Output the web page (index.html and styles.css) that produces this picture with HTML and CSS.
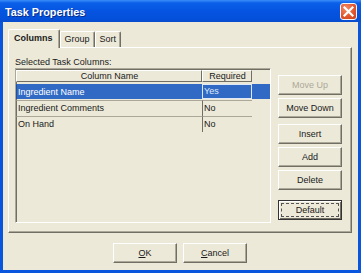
FILE: index.html
```html
<!DOCTYPE html>
<html lang="en">
<head>
    <meta charset="UTF-8">
    <title>Task Properties</title>
    <link rel="stylesheet" href="styles.css">
</head>
<body>
    <div class="window">
        <div class="titlebar">
            <span class="title">Task Properties</span>
            <span class="close-btn">
                <svg width="11" height="11" viewBox="0 0 11 11">
                    <path d="M1.5 1.5 L9.5 9.5 M9.5 1.5 L1.5 9.5" stroke="#fff" stroke-width="2.2" stroke-linecap="square"/>
                </svg>
            </span>
        </div>
        <div class="client">
            <div class="tabs">
                <div class="tab active">Columns</div>
                <div class="tab">Group</div>
                <div class="tab">Sort</div>
            </div>
            <div class="panel">
                <div class="label">Selected Task Columns:</div>
                <div class="panel-body">
                    <div class="grid">
                        <div class="grid-row head">
                            <div class="cell name">Column Name</div>
                            <div class="cell req">Required</div>
                        </div>
                        <div class="grid-row selected">
                            <div class="cell name">Ingredient Name</div>
                            <div class="cell req">Yes</div>
                        </div>
                        <div class="grid-row">
                            <div class="cell name">Ingredient Comments</div>
                            <div class="cell req">No</div>
                        </div>
                        <div class="grid-row">
                            <div class="cell name">On Hand</div>
                            <div class="cell req">No</div>
                        </div>
                    </div>
                    <div class="side-buttons">
                        <button class="btn disabled">Move Up</button>
                        <button class="btn">Move Down</button>
                        <button class="btn gap-top">Insert</button>
                        <button class="btn">Add</button>
                        <button class="btn">Delete</button>
                        <button class="btn default gap-big"><span>Default</span></button>
                    </div>
                </div>
            </div>
            <div class="footer">
                <button class="btn wide"><u>O</u>K</button>
                <button class="btn wide"><u>C</u>ancel</button>
            </div>
        </div>
    </div>
</body>
</html>
```

FILE: styles.css
```css
body {
    margin: 0;
    padding: 0;
    background: #fff;
}
.window {
    width: 361px;
    height: 273px;
    box-sizing: border-box;
    background: #0a55de;
    padding: 0 3px 3px 3px;
    display: flex;
    flex-direction: column;
    font-family: "Liberation Sans", Arial, sans-serif;
    font-size: 9px;
    color: #1a1a1a;
}
.titlebar {
    height: 22px;
    margin: 0 -3px;
    padding: 0 4px 0 5px;
    background: linear-gradient(to bottom, #3c8ef8 0, #0a5fe8 3px, #0553e0 12px, #0450da 19px, #0a4ccd 22px);
    display: flex;
    align-items: center;
    justify-content: space-between;
}
.title {
    color: #fff;
    font-weight: bold;
    font-size: 10.8px;
    text-shadow: 1px 1px 0 #0a2d8a;
    padding-top: 1px;
}
.close-btn {
    width: 15px;
    height: 15px;
    border: 1px solid #f4f4f4;
    border-radius: 3px;
    background: radial-gradient(circle at 35% 30%, #f28a66, #e0532b 60%, #c8431e);
    display: flex;
    align-items: center;
    justify-content: center;
    margin-top: 1px;
}
.client {
    flex: 1;
    background: #ece9d8;
    padding: 7px 6px 0 5px;
    display: flex;
    flex-direction: column;
}
.tabs {
    display: flex;
    align-items: flex-end;
    padding-left: 1px;
    height: 18px;
    position: relative;
    z-index: 1;
}
.tab {
    height: 15px;
    padding: 0 4px 0 4px;
    border-top: 1px solid #fff;
    border-left: 1px solid #fff;
    border-right: 1px solid #716f64;
    box-shadow: inset -1px 0 0 #aca899;
    border-radius: 2px 2px 0 0;
    background: #ece9d8;
    line-height: 15px;
}
.tab.active {
    font-weight: bold;
    padding: 0 6px 0 5px;
    height: 18px;
    line-height: 17px;
    margin-bottom: -1px;
    margin-left: -1px;
}
.panel {
    height: 186px;
    box-sizing: border-box;
    border: 1px solid;
    border-color: #fff #716f64 #716f64 #fff;
    box-shadow: inset -1px -1px 0 #aca899;
    background: #ece9d8;
    padding: 9px 0 0 6px;
}
.label {
    height: 11px;
    line-height: 10px;
}
.panel-body {
    display: flex;
}
.grid {
    width: 256px;
    height: 155px;
    box-sizing: border-box;
    border: 1px solid;
    border-color: #aca899 #fff #fff #aca899;
    box-shadow: inset 1px 1px 0 #716f64;
    background: #ece9d8;
    padding-top: 1px;
}
.grid-row {
    display: flex;
    height: 16px;
}
.grid-row.head {
    height: 12px;
    margin-bottom: 2px;
}
.cell {
    box-sizing: border-box;
    padding-left: 1px;
    white-space: nowrap;
    line-height: 15px;
    border-top: 1px solid #aca899;
    border-left: 1px solid #716f64;
}
.cell.name {
    width: 186px;
}
.cell.req {
    width: 50px;
}
.head .cell {
    text-align: center;
    border: 1px solid;
    border-color: #fff #716f64 #716f64 #fff;
    line-height: 10px;
    background: #ece9d8;
}
.selected {
    background: #316ac5;
    width: 254px;
    height: 15px;
    margin-bottom: 1px;
    color: #fff;
}
.selected .cell {
    border-color: #316ac5;
    line-height: 14px;
}
.selected .cell.name {
    border-left-color: #24509a;
}
.selected .cell.req {
    border: 1px solid #dfe8f7;
    line-height: 13px;
    color: #dfe8f7;
}
.side-buttons {
    display: flex;
    flex-direction: column;
    margin-left: 7px;
    padding-top: 7px;
}
.btn {
    width: 64px;
    height: 20px;
    margin-bottom: 3px;
    font-family: "Liberation Sans", Arial, sans-serif;
    font-size: 9px;
    color: #1a1a1a;
    background: #ece9d8;
    border: 1px solid;
    border-color: #fff #716f64 #716f64 #fff;
    box-shadow: inset -1px -1px 0 #aca899;
    padding: 0;
}
.btn.disabled {
    color: #aca899;
}
.btn.gap-top {
    margin-top: 3px;
}
.btn.gap-big {
    margin-top: 7px;
}
.btn.default {
    border: 1px solid #333;
    box-shadow: inset 1px 1px 0 #fff, inset -1px -1px 0 #716f64;
    padding: 2px;
}
.btn.default span {
    display: block;
    height: 100%;
    box-sizing: border-box;
    border: 1px dashed #555;
    line-height: 12px;
}
.footer {
    display: flex;
    justify-content: center;
    gap: 6px;
    padding-top: 10px;
}
.btn.wide {
    width: 64px;
}
```
